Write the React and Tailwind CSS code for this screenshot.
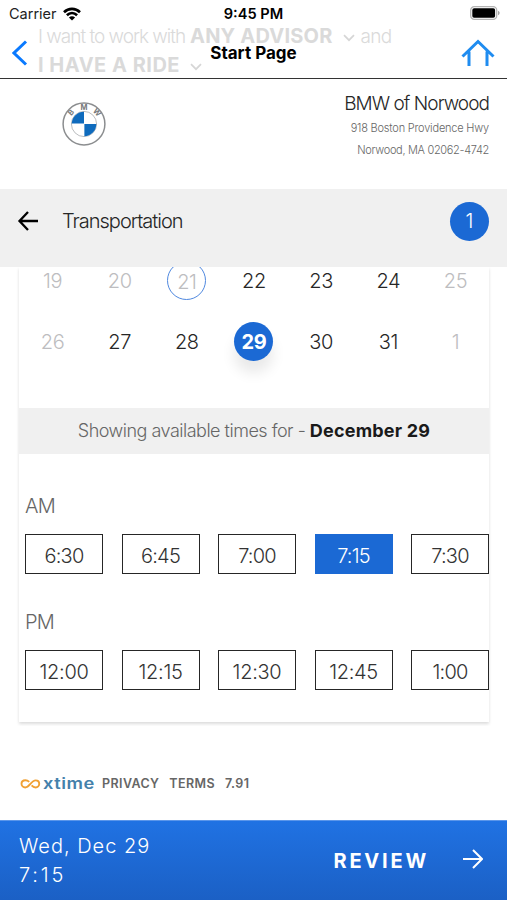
import clsx from "clsx";

const WEEKS = [
  [
    { day: 19, off: true },
    { day: 20, off: true },
    { day: 21, off: true, today: true },
    { day: 22 },
    { day: 23 },
    { day: 24 },
    { day: 25, off: true },
  ],
  [
    { day: 26, off: true },
    { day: 27 },
    { day: 28 },
    { day: 29, selected: true },
    { day: 30 },
    { day: 31 },
    { day: 1, off: true },
  ],
];

const AM_TIMES = ["6:30", "6:45", "7:00", "7:15", "7:30"];
const PM_TIMES = ["12:00", "12:15", "12:30", "12:45", "1:00"];

function WifiIcon() {
  return (
    <svg width="18" height="14" viewBox="0 0 18 14" fill="none" stroke="#000" strokeWidth="2.6">
      <path d="M1 5.2C5.6.7 12.4.7 17 5.2" />
      <path d="M3.9 8.3c3-2.9 7.2-2.9 10.2 0" />
      <path d="M9 13.6 5.9 10.5c1.8-1.7 4.4-1.7 6.2 0Z" fill="#000" stroke="none" />
    </svg>
  );
}

function BatteryIcon() {
  return (
    <svg width="31" height="14" viewBox="0 0 31 14" fill="none">
      <rect x="0.7" y="0.7" width="26" height="12.6" rx="3.6" stroke="#b4b4b4" strokeWidth="1.3" />
      <rect x="2.3" y="2.3" width="22.8" height="9.4" rx="1.8" fill="#000" />
      <path d="M28 4.8c2.2.8 2.2 3.6 0 4.4Z" fill="#a6a6a6" />
    </svg>
  );
}

function CaretIcon({ className }) {
  return (
    <svg className={className} width="12" height="8" viewBox="0 0 12 8" fill="none" stroke="#d6d6d6" strokeWidth="1.7">
      <path d="M1 1.2 6 6.2l5-5" />
    </svg>
  );
}

function BmwLogo() {
  return (
    <svg width="44" height="44" viewBox="0 0 44 44">
      <circle cx="22" cy="22" r="20.9" fill="#fff" stroke="#8b8d8f" strokeWidth="1.5" />
      <circle cx="22" cy="22" r="12.6" fill="#fff" stroke="#a9acaf" strokeWidth="0.8" />
      <path d="M22 21.6V9.7A12.3 12.3 0 0 0 9.7 21.6Z" fill="#0f6bbd" />
      <path d="M22.4 22v12.3a12.3 12.3 0 0 0 11.9-12.3Z" fill="#0f6bbd" />
      <g fill="#77797b" fontFamily="Inter, sans-serif" fontWeight="700" fontSize="7.5" textAnchor="middle">
        <text transform="translate(10.8 12.2) rotate(-48)">B</text>
        <text x="22" y="8">M</text>
        <text transform="translate(33.2 12.2) rotate(48)">W</text>
      </g>
    </svg>
  );
}

function XtimeLogo() {
  return (
    <div className="flex items-center w-[73px]">
      <svg className="shrink-0" width="21" height="10" viewBox="0 0 22 11" fill="none" stroke="#f0a033" strokeWidth="2.1">
        <path d="M9.6 3.2C8.3 2 7 1.4 5.4 1.4 3 1.4 1.1 3 1.1 5.3s1.9 4 4.2 4c4.6 0 6.6-7.8 11.3-7.8 2.4 0 4 1.6 4 3.8s-1.7 4-4 4c-1.9 0-3.2-.9-4.4-2.2" />
      </svg>
      <span className="ml-[2px] origin-left scale-x-[1.22] text-[15px] leading-4 font-semibold text-[#4481ab]">xtime</span>
    </div>
  );
}

function Day({ day, off, today, selected }) {
  return (
    <div className="flex justify-center items-center h-[61px]">
      <span
        className={clsx(
          "flex justify-center items-center size-[39px] rounded-full text-xl tracking-[-0.4px]",
          selected && "bg-[#1b69d4] text-white font-bold shadow-[0_12px_14px_rgba(0,0,0,0.09)]",
          today && "border-[1.5px] border-[#4f88df] pt-[2px]",
          !selected && "font-light",
          off && "text-[#bdbdc0]",
          !off && !selected && "text-[#262626]"
        )}
      >
        {day}
      </span>
    </div>
  );
}

function TimeRow({ label, times, picked }) {
  return (
    <div>
      <div className="h-[30px] leading-[32px] text-xl font-light tracking-[-0.8px] text-[#666]">{label}</div>
      <div className="flex justify-between mt-[14px] w-[464px]">
        {times.map((time) => (
          <div
            key={time}
            className={clsx(
              "flex justify-center items-center w-[78px] h-10 pt-[3px] text-xl font-light",
              time.length > 4 ? "tracking-[-0.3px]" : "tracking-[-0.8px]",
              time === picked ? "bg-[#1b69d4] text-white" : "bg-white border-[1.5px] border-[#262626] text-[#333]"
            )}
          >
            {time}
          </div>
        ))}
      </div>
    </div>
  );
}

function Header() {
  return (
    <header className="relative h-[79px] border-b-[1.5px] border-[#333]">
      <div className="absolute left-[38px] top-[22px] text-xl leading-[29px] text-[#dadada] whitespace-nowrap">
        <div className="flex items-center">
          <span className="w-[148px] font-light text-[19px] tracking-[-1px]">I want to work with</span>
          <b className="ml-[4px] tracking-[0.2px]">ANY ADVISOR</b>
          <CaretIcon className="ml-[10px] mt-[3px]" />
          <span className="ml-[6px] font-light text-[19px] tracking-[-0.7px]">and</span>
        </div>
        <div className="flex items-center">
          <b className="tracking-[0.5px]">I HAVE A RIDE</b>
          <CaretIcon className="ml-[10px] mt-[3px]" />
        </div>
      </div>
      <div className="relative grid grid-cols-3 items-center h-7 px-[9px]">
        <div className="flex items-center gap-[6px] text-[14.5px] text-[#222]">
          Carrier
          <WifiIcon />
        </div>
        <div className="pt-[2px] text-center text-[14.6px] font-semibold">9:45 PM</div>
        <div className="flex justify-end -mr-[3px] pb-[2px]">
          <BatteryIcon />
        </div>
      </div>
      <div className="relative grid grid-cols-3 items-center h-[49px] px-3">
        <svg width="16" height="26" viewBox="0 0 16 26" fill="none" stroke="#0a7aff" strokeWidth="3">
          <path d="M14 1.5 2 13l12 11.5" />
        </svg>
        <h1 className="pt-[2px] text-center text-[17px] font-bold text-black">Start Page</h1>
        <svg className="justify-self-end" width="34" height="28" viewBox="0 0 34 28" fill="none" stroke="#1f8cf0" strokeWidth="3">
          <path d="M1.5 17.5 17 2.5 32.5 17.5M8 12.5V27M26 12.5V27" />
        </svg>
      </div>
    </header>
  );
}

export default function App() {
  return (
    <div className="flex flex-col w-[507px] h-[900px] overflow-hidden bg-white font-['Inter',sans-serif]">
      <Header />

      <section className="flex justify-between h-[110px] pl-[62px] pr-[18px]">
        <div className="pt-[23px]">
          <BmwLogo />
        </div>
        <div className="pt-[13px] text-right font-light">
          <div className="text-[19px] leading-[24px] tracking-[-0.95px] text-[#262626]">BMW of Norwood</div>
          <div className="pt-px text-[11px] leading-[22px] tracking-[-0.2px] text-[#666]">918 Boston Providence Hwy</div>
          <div className="text-[11px] leading-[22px] tracking-[-0.32px] text-[#666]">Norwood, MA 02062-4742</div>
        </div>
      </section>

      <section className="flex items-center h-[78px] pb-[14px] pl-[17px] pr-[18px] bg-[#f0f0f0]">
        <svg width="22" height="20" viewBox="0 0 22 20" fill="none" stroke="#000" strokeWidth="2.3">
          <path d="M21 10H3M11 1 2.5 10l8.5 9" />
        </svg>
        <h2 className="ml-[23px] text-xl font-light tracking-[-1px] text-[#262626]">Transportation</h2>
        <span className="flex justify-center items-center size-[39px] ml-auto rounded-full bg-[#1b69d4] text-white text-xl font-light">1</span>
      </section>

      {/* clips the scrolled weeks under the title bar */}
      <main className="h-[459px] px-[19px] overflow-hidden">
        <div className="flow-root h-[455px] w-[470px] shadow-[0_2px_3px_rgba(0,0,0,0.14)]">
          <div className="-mt-[17px] h-[158px]">
            {WEEKS.map((week, i) => (
              <div key={i} className="grid grid-cols-7">
                {week.map((d) => (
                  <Day key={d.day} {...d} />
                ))}
              </div>
            ))}
          </div>
          <div className="flex justify-center items-center h-[46px] bg-[#f0f0f0] text-lg font-light tracking-[-0.5px] text-[#666] whitespace-pre">
            Showing available times for - <b className="font-bold tracking-[0.2px] text-[#1a1a1a]">December 29</b>
          </div>
          <div className="flex flex-col gap-8 pt-9 pl-[6px]">
            <TimeRow label="AM" times={AM_TIMES} picked="7:15" />
            <TimeRow label="PM" times={PM_TIMES} />
          </div>
        </div>
      </main>

      <footer className="flex items-center h-[94px] pt-[22px] pl-5 text-[12.5px] font-semibold tracking-[0.4px] text-[#666]">
        <XtimeLogo />
        <span className="ml-[9px]">PRIVACY</span>
        <span className="ml-[10px]">TERMS</span>
        <span className="ml-[10px]">7.91</span>
      </footer>

      <div className="flex items-center h-20 pl-[19px] pr-6 border-t border-[#5b96ea] bg-linear-to-b from-[#2072e3] to-[#1b60c5] text-white">
        <div className="text-xl leading-[29px] font-light tracking-[1px]">
          <div>Wed, Dec 29</div>
          <div className="tracking-[2.8px]">7:15</div>
        </div>
        <span className="ml-auto text-xl font-bold tracking-[2.8px]">REVIEW</span>
        <svg className="ml-[34px] -mt-1" width="20" height="20" viewBox="0 0 20 20" fill="none" stroke="#fff" strokeWidth="2">
          <path d="M0 10h18M10 1l9 9-9 9" />
        </svg>
      </div>
    </div>
  );
}
